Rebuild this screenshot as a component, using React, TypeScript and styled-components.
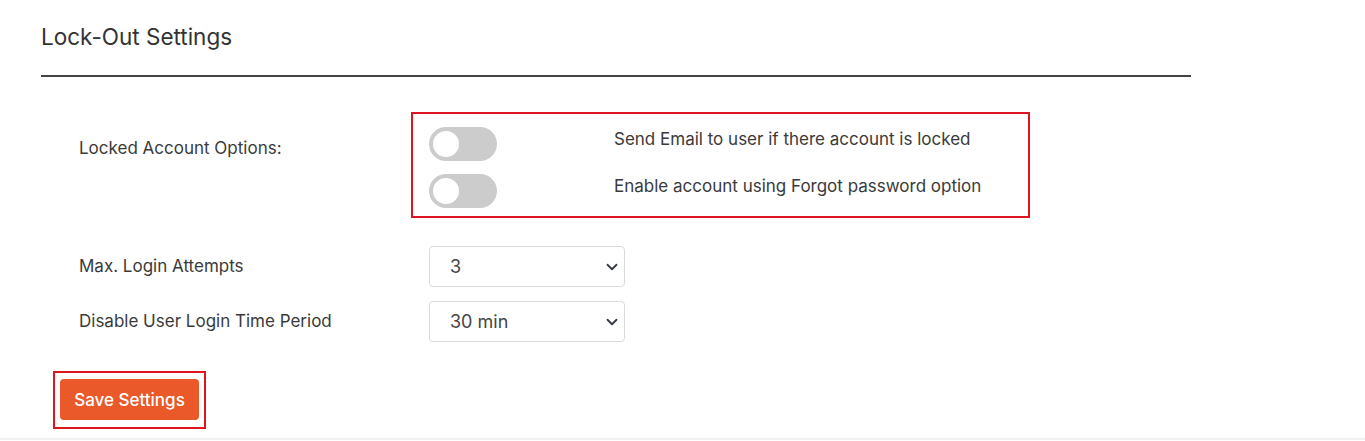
import React from 'react';
import styled, { createGlobalStyle } from 'styled-components';

const GlobalStyle = createGlobalStyle`
  body {
    margin: 0;
    background: #fff;
    font-family: Inter, "Noto Sans", sans-serif;
    color: #3a3a3a;
  }
`;

const Chevron = () => (
  <svg width="12" height="12" viewBox="0 0 16 16" fill="none">
    <path d="M2 5l6 6 6-6" stroke="#343a40" strokeWidth="2.4" strokeLinecap="round" strokeLinejoin="round" />
  </svg>
);

export default function App() {
  return (
    <>
      <GlobalStyle />
      <Page>
        <Title>Lock-Out Settings</Title>
        <Divider />
        <Form>
          <OptionsRow>
            <Label $top>Locked Account Options:</Label>
            <Highlight>
              <ToggleRow>
                <Toggle />
                <ToggleText>Send Email to user if there account is locked</ToggleText>
              </ToggleRow>
              <ToggleRow>
                <Toggle />
                <ToggleText>Enable account using Forgot password option</ToggleText>
              </ToggleRow>
            </Highlight>
          </OptionsRow>
          <SelectRows>
            <FieldRow>
              <Label>Max. Login Attempts</Label>
              <SelectWrap>
                <Select defaultValue="3">
                  <option>1</option>
                  <option>2</option>
                  <option>3</option>
                  <option>4</option>
                  <option>5</option>
                </Select>
                <ChevronBox><Chevron /></ChevronBox>
              </SelectWrap>
            </FieldRow>
            <FieldRow>
              <Label>Disable User Login Time Period</Label>
              <SelectWrap>
                <Select defaultValue="30 min">
                  <option>15 min</option>
                  <option>30 min</option>
                  <option>60 min</option>
                </Select>
                <ChevronBox><Chevron /></ChevronBox>
              </SelectWrap>
            </FieldRow>
          </SelectRows>
        </Form>
        <ButtonFrame>
          <SaveButton>Save Settings</SaveButton>
        </ButtonFrame>
      </Page>
      <BottomEdge />
    </>
  );
}

const Page = styled.div`
  padding: 23px 0 0 41px;
  width: 1150px;
`;

const Title = styled.h2`
  margin: 0;
  font-size: 22.5px;
  font-weight: 400;
  color: #333;
  line-height: 28px;
`;

const Divider = styled.div`
  margin-top: 24px;
  height: 1.5px;
  background: #444;
`;

const Form = styled.div`
  padding-left: 38px;
  margin-top: 35px;
`;

const OptionsRow = styled.div`
  display: flex;
  align-items: flex-start;
`;

const Label = styled.div<{ $top?: boolean }>`
  width: 332px;
  font-size: 17px;
  line-height: 24px;
  color: #3a3a3a;
  padding-top: ${p => (p.$top ? '24px' : '0')};
`;

const Highlight = styled.div`
  width: 619px;
  height: 106px;
  box-sizing: border-box;
  border: 2px solid #e0141e;
  padding: 13px 0 0 16px;
  display: flex;
  flex-direction: column;
  gap: 13px;
`;

const ToggleRow = styled.div`
  display: flex;
  align-items: flex-start;
`;

const Toggle = styled.span`
  position: relative;
  width: 68px;
  height: 34px;
  border-radius: 17px;
  background: #ccc;
  flex-shrink: 0;

  &::after {
    content: '';
    position: absolute;
    left: 4px;
    top: 4px;
    width: 26px;
    height: 26px;
    border-radius: 50%;
    background: #fff;
  }
`;

const ToggleText = styled.span`
  margin-left: 117px;
  font-size: 17px;
  line-height: 24px;
  color: #3a3a3a;
`;

const SelectRows = styled.div`
  margin-top: 28px;
  display: flex;
  flex-direction: column;
  gap: 14px;
`;

const FieldRow = styled.div`
  display: flex;
  align-items: center;
  padding-left: 18px;

  & > ${Label} {
    width: 332px;
    margin-left: -18px;
    padding-right: 18px;
  }
`;

const SelectWrap = styled.div`
  position: relative;
  width: 196px;
  height: 41px;
`;

const Select = styled.select`
  appearance: none;
  width: 100%;
  height: 100%;
  box-sizing: border-box;
  border: 1px solid #dadada;
  border-radius: 4px;
  background: #fff;
  padding: 0 0 0 20px;
  font-family: Inter, "Noto Sans", sans-serif;
  font-size: 18px;
  color: #444;
`;

const ChevronBox = styled.span`
  position: absolute;
  right: 7px;
  top: 15px;
  pointer-events: none;
  display: flex;
`;

const ButtonFrame = styled.div`
  margin: 29px 0 0 12px;
  width: 153px;
  height: 58px;
  box-sizing: border-box;
  border: 2px solid #e0141e;
  display: flex;
  align-items: center;
  justify-content: center;
`;

const SaveButton = styled.button`
  width: 139px;
  height: 41px;
  border: none;
  border-radius: 4px;
  background: #e9592a;
  color: #fff;
  font-family: Inter, "Noto Sans", sans-serif;
  font-size: 17px;
  font-weight: 500;
`;

const BottomEdge = styled.div`
  margin-top: 9px;
  height: 2px;
  background: #f1f1f1;
`;
